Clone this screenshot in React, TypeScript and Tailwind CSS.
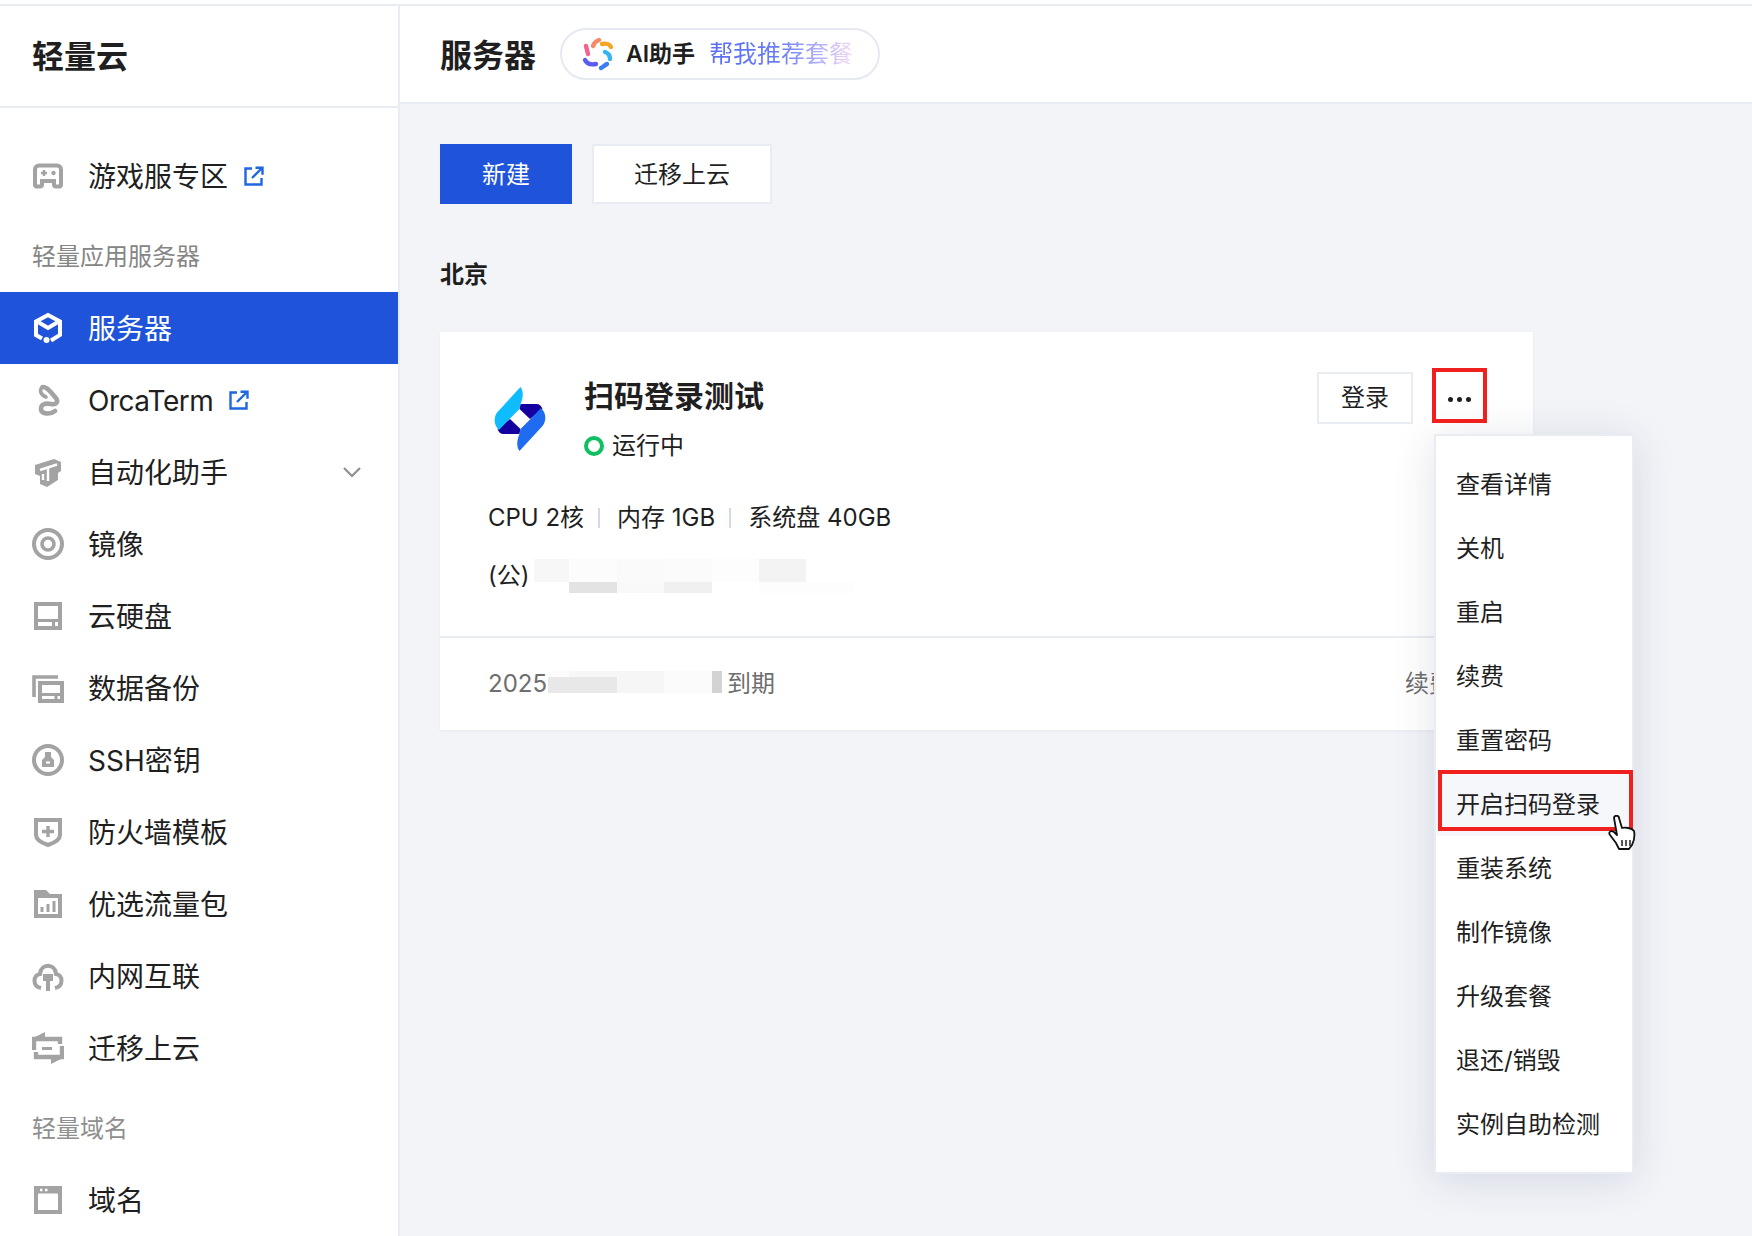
import React from "react";

const G = "#a3a3a3";
const Ext = () => (
  <svg width="20" height="20" viewBox="0 0 20 20" fill="none" stroke="#1f66e0" strokeWidth="2.4">
    <path d="M8 2.5H1.5v16h16V12" />
    <path d="M8 12 17 3M11.5 1.8h7v7" />
  </svg>
);
const Ico = ({ children }: { children: React.ReactNode }) => (
  <svg width="32" height="32" viewBox="0 0 32 32" fill="none" stroke={G} strokeWidth="4" className="shrink-0">
    {children}
  </svg>
);

const Cube = () => (
  <svg width="32" height="32" viewBox="0 0 32 32" fill="none" stroke="#fff" strokeWidth="4" className="shrink-0">
    <path d="M10 26.500 4 23V9.500L16 3l12 6.500V23l-9 5.500" />
    <path d="M6 10l10 6 10-6" />
    <circle cx="14.500" cy="28" r="3" fill="#fff" stroke="none" />
  </svg>
);

const navIcon = (k: string): React.ReactNode => {
  switch (k) {
    case "game":
      return (
        <Ico>
          <path d="M7 5.500h18a4 4 0 0 1 4 4V25a1.500 1.500 0 0 1-1.500 1.500H24a2 2 0 0 1-2-2V21H10v3.500a2 2 0 0 1-2 2H4.500A1.500 1.500 0 0 1 3 25V9.500a4 4 0 0 1 4-4Z" strokeWidth="4" />
          <path d="M9 13h6M12 10v6" strokeWidth="2.400" />
          <circle cx="21.500" cy="13" r="2.200" fill={G} stroke="none" />
        </Ico>
      );
    case "orca":
      return (
        <Ico>
          <path d="M11 3c4 0 8 5 12 10 4 4 2 8-4 7-6-1-10 0-10 5 0 5 9 6 14 2" strokeWidth="4.600" strokeLinecap="round" />
          <path d="M10 3c-3 4-1 8 4 10" strokeWidth="3.600" strokeLinecap="round" />
        </Ico>
      );
    case "auto":
      return (
        <Ico>
          <path d="M3 9 22 3l7 3v9l-3 2v7l-11 7-7-3v-8l-5-2Z" fill={G} stroke="none" />
          <path d="M8 14 25 8.500M16 12v13M11 18v6" stroke="#fff" strokeWidth="2.400" />
        </Ico>
      );
    case "image":
      return (
        <Ico>
          <circle cx="16" cy="16" r="14" strokeWidth="4" />
          <circle cx="16" cy="16" r="6" strokeWidth="3.600" />
        </Ico>
      );
    case "disk":
      return (
        <Ico>
          <path d="M4 4h24v24H4z" />
          <path d="M4 20.500h24" strokeWidth="3" />
          <path d="M21.500 22v4" strokeWidth="3" />
        </Ico>
      );
    case "backup":
      return (
        <Ico>
          <path d="M2 25V5h24" strokeWidth="3.600" />
          <path d="M8 11h22v18H8z" strokeWidth="4" />
          <path d="M8 22.500h22" strokeWidth="3" />
          <path d="M24 24v3" strokeWidth="3" />
        </Ico>
      );
    case "ssh":
      return (
        <Ico>
          <circle cx="16" cy="16" r="14" strokeWidth="4" />
          <path d="M13 8h6v5l3 3v7H10v-7l3-3z" fill={G} stroke="none" />
          <path d="M14 18.500h4" stroke="#fff" strokeWidth="2.200" />
        </Ico>
      );
    case "fw":
      return (
        <Ico>
          <path d="M4 4h24v15c0 5-6 8-12 10-6-2-12-5-12-10z" />
          <path d="M16 10v11M10 15.500h12" strokeWidth="3.400" />
        </Ico>
      );
    case "traffic":
      return (
        <Ico>
          <path d="M4 28V8h24v20z" />
          <path d="M2 2h12l4 4v4H2z" fill={G} stroke="none" />
          <path d="M10 19v5M16 16v8M22 13v11" strokeWidth="3" />
        </Ico>
      );
    case "net":
      return (
        <Ico>
          <path d="M9 28C0 26 1 15 8 14 9 3 23 3 24 14c7 1 8 12-1 14" strokeWidth="4" />
          <path d="M11 14h10v7h-3v10h-4V21h-3z" fill={G} stroke="none" />
        </Ico>
      );
    case "move":
      return (
        <Ico>
          <path d="M2 18V7h26v5" strokeWidth="4.400" />
          <path d="M30 14v11H4v-5" strokeWidth="4.400" />
          <path d="M3 5l10-5v5zM29 27l-10 5v-5z" fill={G} stroke="none" />
          <path d="M10 16.500h10" strokeWidth="3" />
        </Ico>
      );
    case "domain":
      return (
        <Ico>
          <path d="M4 4h24v24H4z" />
          <path d="M4 7h24" strokeWidth="5" />
          <path d="M8 6h2.500M13 6h2.500" stroke="#fff" strokeWidth="2.400" />
        </Ico>
      );
  }
  return null;
};

const NavRow = ({ k, label, ext, chevron }: { k: string; label: string; ext?: boolean; chevron?: boolean }) => (
  <div className="flex h-[72px] items-center pl-8 pr-9 text-[28px] text-[#1f1f1f]">
    {navIcon(k)}
    <span className={k === "orca" ? "ml-6 pt-[2px] tracking-[-0.5px]" : "ml-6 pt-[2px]"}>{label}</span>
    {ext && <span className="ml-4 flex"><Ext /></span>}
    {chevron && (
      <svg className="ml-auto" width="20" height="12" viewBox="0 0 20 12" fill="none" stroke="#8f8f8f" strokeWidth="2.200">
        <path d="M2 2l8 8 8-8" />
      </svg>
    )}
  </div>
);

const menu = ["查看详情", "关机", "重启", "续费", "重置密码", "开启扫码登录", "重装系统", "制作镜像", "升级套餐", "退还/销毁", "实例自助检测"];

const blur: [number, number, number, number, string][] = [
  [0, 0, 35, 23, "#f7f7f7"],
  [35, 0, 48, 23, "#fcfcfc"],
  [83, 0, 47, 23, "#fafafa"],
  [130, 0, 48, 23, "#fbfbfb"],
  [178, 0, 47, 23, "#fdfdfd"],
  [225, 0, 47, 23, "#f3f3f3"],
  [35, 23, 48, 11, "#e3e3e3"],
  [83, 23, 47, 11, "#f9f9f9"],
  [130, 23, 48, 11, "#f0f0f0"],
  [225, 23, 95, 11, "#fdfdfd"],
];
const blur2: [number, number, number, number, string][] = [
  [0, 0, 21, 6, "#fcfcfc"],
  [21, 0, 48, 6, "#f7f7f7"],
  [0, 6, 69, 16, "#e8e8e8"],
  [69, 0, 47, 22, "#f6f6f6"],
  [116, 0, 48, 22, "#fbfbfb"],
  [164, 0, 10, 22, "#d3d3d3"],
];

const Redact = ({ items, className }: { items: [number, number, number, number, string][]; className: string }) => (
  <div className={className}>
    {items.map(([x, y, w, h, c], i) => (
      <div key={i} className="absolute" style={{ left: x, top: y, width: w, height: h, background: c }} />
    ))}
  </div>
);

export default function App() {
  return (
    <div className="relative h-[1236px] w-[1752px] overflow-hidden bg-[#f2f4f8] text-[#1f1f1f] [font-family:Inter,'Noto_Sans_CJK_SC',sans-serif]">
      <div className="h-1.5 border-b-2 border-[#e9ecf2] bg-white" />
      <div className="flex h-[1230px]">
        <aside className="w-[400px] shrink-0 border-r-2 border-[#e9ecf2] bg-white">
          <div className="flex h-[102px] items-center border-b-2 border-[#e9ecf2] pl-8 pt-[2px] text-[32px] font-semibold leading-none">轻量云</div>
          <div className="pt-8">
            <NavRow k="game" label="游戏服专区" ext />
            <div className="flex h-[80px] items-center pl-8 pt-[10px] text-2xl text-[#858585]">轻量应用服务器</div>
            <div className="flex h-[72px] items-center bg-[#1f54da] pl-8 text-[28px] text-white">
              <Cube />
              <span className="ml-6 pt-[2px]">服务器</span>
            </div>
            <NavRow k="orca" label="OrcaTerm" ext />
            <NavRow k="auto" label="自动化助手" chevron />
            <NavRow k="image" label="镜像" />
            <NavRow k="disk" label="云硬盘" />
            <NavRow k="backup" label="数据备份" />
            <NavRow k="ssh" label="SSH密钥" />
            <NavRow k="fw" label="防火墙模板" />
            <NavRow k="traffic" label="优选流量包" />
            <NavRow k="net" label="内网互联" />
            <NavRow k="move" label="迁移上云" />
            <div className="flex h-20 items-center pl-8 pt-[10px] text-2xl text-[#8f8f8f]">轻量域名</div>
            <NavRow k="domain" label="域名" />
          </div>
        </aside>
        <main className="min-w-0 flex-1">
          <div className="flex h-[98px] items-center border-b-2 border-[#e9ecf2] bg-white pl-10">
            <h1 className="pt-1 text-[32px] font-semibold leading-none">服务器</h1>
            <div className="ml-6 flex h-[52px] w-[320px] items-center rounded-full border-2 border-[#e6e9f2] pl-5">
              <svg width="32" height="34" viewBox="0 0 32 34" fill="none" strokeWidth="4.400" strokeLinecap="round">
                <path d="M4 9l2 8" stroke="#f0648f" />
                <path d="M11 9c1-3 3-5 6-6" stroke="#f58a66" />
                <path d="M20 7c4-1 8 0 9 3" stroke="#f5a623" />
                <path d="M23 15c3 1 5 3 5 7" stroke="#33b5f5" />
                <path d="M25 27c-2 1-4 3-6 4" stroke="#3b7cf6" />
                <path d="M3 23c2 4 6 5 11 4" stroke="#5a5cf2" />
              </svg>
              <span className="ml-3 text-[23px] font-semibold leading-none">AI助手</span>
              <span className="ml-[14px] bg-gradient-to-r from-[#5a6cf5] via-[#6a7cf5] to-[#f7d9f5] bg-clip-text text-2xl leading-none text-transparent">帮我推荐套餐</span>
            </div>
          </div>
          <div className="px-10 pt-10">
            <div className="flex gap-5">
              <button className="h-[60px] w-[132px] bg-[#1f54da] pt-[2px] text-2xl text-white">新建</button>
              <button className="h-[60px] w-[180px] border-2 border-[#e9ecf2] bg-white pt-[2px] text-2xl">迁移上云</button>
            </div>
            <h2 className="mt-[54px] text-2xl font-semibold leading-[34px]">北京</h2>
            <section className="mt-10 h-[398px] w-[1093px] bg-white shadow-[0_1px_3px_rgba(30,40,80,0.05)]">
              <div className="h-[306px] border-b-2 border-[#e9ecf2] px-12 pt-[46px]">
                <div className="flex">
                  <svg className="ml-[6px] mt-[9px]" width="52" height="64" viewBox="0 0 51 64" fill="none">
                    <path d="M26 17H42C45 17 47 19 48 22L35.500 32 25 22Z" fill="#14009e" />
                    <path d="M25 47H9C6 47 4 45 3 42L15.500 32 26 42Z" fill="#14009e" />
                    <path d="M26 0C29 4 29 10 26 17L25 22 15 32 4.500 43C-1 38-1 30 3 25Z" fill="#0fbcff" />
                    <path d="M25 64C22 60 22 54 25 47L26 42 36 32 46.500 21C52 26 52 34 48 39Z" fill="#1f6cf0" />
                  </svg>
                  <div className="ml-[38px]">
                    <div className="text-[30px] font-semibold leading-9">扫码登录测试</div>
                    <div className="mt-4 flex items-center text-2xl leading-8">
                      <span className="h-5 w-5 rounded-full border-[4px] border-[#0fbf62]" />
                      <span className="ml-2">运行中</span>
                    </div>
                  </div>
                  <button className="ml-auto mt-[-6px] h-[52px] w-[96px] border-2 border-[#e9ecf2] text-2xl">登录</button>
                  <span className="ml-[21px] mr-px mt-[-5px] flex h-[52px] w-[50px] items-center justify-center gap-[4px]">
                    <i className="h-[5px] w-[5px] rounded-full bg-[#1f1f1f]" />
                    <i className="h-[5px] w-[5px] rounded-full bg-[#1f1f1f]" />
                    <i className="h-[5px] w-[5px] rounded-full bg-[#1f1f1f]" />
                  </span>
                </div>
                <div className="mt-10 flex items-center text-2xl leading-8">
                  <span>CPU&nbsp;2核</span>
                  <i className="ml-[14px] mr-[17px] h-5 w-[2px] bg-[#d3d9e6]" />
                  <span>内存&nbsp;1GB</span>
                  <i className="ml-[14px] mr-[17px] h-5 w-[2px] bg-[#d3d9e6]" />
                  <span>系统盘&nbsp;40GB</span>
                </div>
                <div className="relative mt-[26px] text-2xl leading-8">
                  (公)
                  <Redact items={blur} className="absolute left-[46px] top-[-1px]" />
                </div>
              </div>
              <div className="relative flex h-[90px] items-center justify-between px-12 pt-[2px] text-2xl text-[#6e6e6e]">
                <span>2025-</span>
                <span className="absolute left-[287px]">到期</span>
                <Redact items={blur2} className="absolute left-[108px] top-[33px]" />
                <span className="mr-8">续费</span>
              </div>
            </section>
          </div>
        </main>
      </div>

      {/* dropdown overlay */}
      <div className="absolute left-[1434px] top-[434px] w-[200px] border-2 border-[#e9ecf2] bg-white py-4 shadow-[0_6px_40px_rgba(40,50,90,0.14)]">
        {menu.map((m) => (
          <div key={m} className={`flex h-16 items-center pl-5 pt-[2px] text-2xl ${m === "开启扫码登录" ? "bg-[#f6f7fb]" : ""}`}>
            {m}
          </div>
        ))}
      </div>
      {/* annotation boxes */}
      <div className="absolute left-[1432px] top-[368px] h-[55px] w-[55px] border-4 border-[#f0201f]" />
      <div className="absolute left-[1438px] top-[770px] h-[61px] w-[195px] border-4 border-[#f0201f]" />
      {/* pointer */}
      <svg className="absolute left-[1608px] top-[815px]" width="28" height="36" viewBox="0 0 28 36" fill="#fff" stroke="#111" strokeWidth="1.800" strokeLinejoin="round">
        <path d="M6 3c0-3 5-3 5 0l3 10c3-1 10 0 12 3 1 5 0 10-2 14l-3 4H11l-3-6-6-8c-2-3 1-5 4-3l3 3Z" />
        <path d="M14 25v6M18 25v6M22 25v6" strokeWidth="1.400" />
      </svg>
    </div>
  );
}
